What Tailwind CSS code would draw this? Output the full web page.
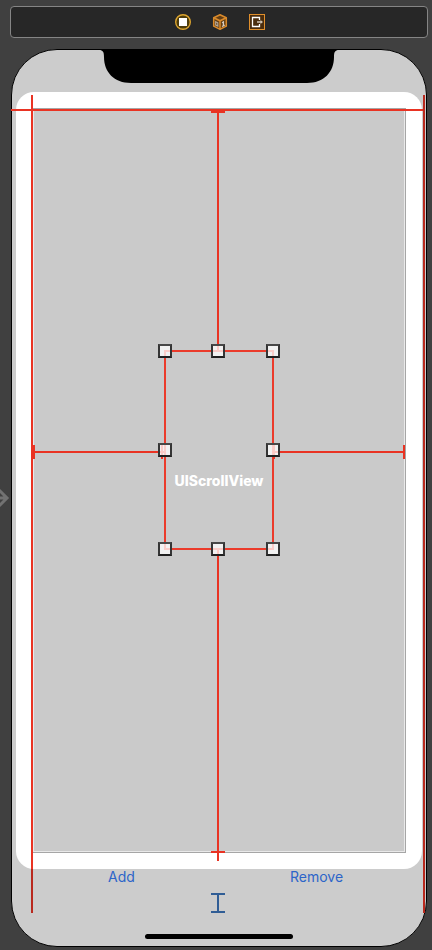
<!DOCTYPE html>
<html lang="en">
<head>
<meta charset="utf-8">
<meta name="viewport" content="width=device-width, initial-scale=1">
<title>Scene editor</title>
<script src="https://cdn.jsdelivr.net/npm/@tailwindcss/browser@4"></script>
</head>
<body class="relative flex min-h-screen flex-col overflow-x-hidden bg-[#404040] font-['Inter','Liberation_Sans',sans-serif]">

  <!-- Scene dock -->
  <header class="mt-1.5 mr-1 ml-2.5 flex h-8 items-center justify-center gap-5 rounded border border-[#858585] bg-[#272727] pl-0.5">
    <button type="button" aria-label="View controller" class="size-4">
      <svg class="block size-4" viewBox="0 0 16 16"><circle cx="8" cy="8" r="7.3" fill="#4d3c0c" stroke="#dda52f" stroke-width="1.4"/><rect x="4" y="4" width="8" height="8" fill="#fff"/></svg>
    </button>
    <button type="button" aria-label="First responder" class="mx-px size-4">
      <svg class="block size-4" viewBox="0 0 16 16"><path d="M8 .8 14.3 3.8V12.2L8 15.3 1.7 12.2V3.8Z" fill="#633e14" stroke="#d98a2b" stroke-width="1.5" stroke-linejoin="round"/><path d="M1.7 3.8 8 6.8 14.3 3.8M8 6.8V15.3" fill="none" stroke="#d98a2b" stroke-width="1.5"/><path d="M3.7 7.8 5.8 8.8V12L3.7 11Z" fill="none" stroke="#b5a898" stroke-width="1.2"/><path d="M10.1 8.8 11.4 7.9V11.8M10 12.5 12.7 11.2" fill="none" stroke="#d5ccc2" stroke-width="1.3"/></svg>
    </button>
    <button type="button" aria-label="Exit" class="size-4">
      <svg class="block size-4" viewBox="0 0 16 16"><rect x=".5" y=".5" width="15" height="15" fill="#4a2d0e" stroke="#e08f2c"/><path d="M10.5 6V3.5H3.5V12.5H10.5V10" fill="none" stroke="#fff" stroke-width="1.3"/><path d="M8 8H13" stroke="#cfc5b8" stroke-width="1.5"/><path d="M11.5 6 14 8 11.5 10Z" fill="#cfc5b8"/></svg>
    </button>
  </header>

  <!-- Entry point arrow -->
  <svg class="absolute top-[488px] left-0 h-5 w-2.5" viewBox="0 0 10 20" fill="none" stroke="#727272" stroke-width="3"><path d="M0 10H6M-1 2 7 10 -1 18"/></svg>

  <!-- Device -->
  <main class="relative mt-[11px] mr-[5px] mb-0.5 ml-[11px] flex flex-col rounded-[46px] border border-black bg-[#cccccc]">
    <div class="flex h-[42px] justify-center">
      <svg class="h-[34px] w-60" viewBox="0 0 240 34"><path d="M0 0H240C236 0 235 2 235 7C235 22 225 33 208 33H32C15 33 5 22 5 7C5 2 4 0 0 0Z"/></svg>
    </div>

    <section class="mx-1 rounded-[18px] bg-white p-4">
      <div class="relative flex h-[745px] items-center justify-center border border-[#a6a6a6] bg-[#cacaca] shadow-[inset_0_0_0_1px_#e9e9e9]">
        <h1 class="text-sm leading-4 font-extrabold text-white">UIScrollView</h1>

        <!-- Edge constraints -->
        <div class="absolute top-0.5 left-1/2 -ml-0.5 h-60 w-0.5 bg-[#e93323]"></div>
        <div class="absolute top-0.5 left-1/2 -ml-2 h-0.5 w-3.5 bg-[#e93323]"></div>
        <div class="absolute top-[441px] -bottom-[9px] left-1/2 -ml-0.5 w-0.5 bg-[#e93323]"></div>
        <div class="absolute -bottom-px left-1/2 -ml-2 h-0.5 w-3.5 bg-[#e93323]"></div>
        <div class="absolute top-[342px] right-1/2 left-0 mr-[55px] h-0.5 bg-[#e93323]"></div>
        <div class="absolute top-[336px] left-0 h-3.5 w-0.5 bg-[#e93323]"></div>
        <div class="absolute top-[342px] right-0 left-1/2 ml-[55px] h-0.5 bg-[#e93323]"></div>
        <div class="absolute top-[336px] right-0 h-3.5 w-0.5 bg-[#e93323]"></div>

        <!-- Selection -->
        <div class="absolute top-[241px] left-1/2 h-[200px] w-[110px] -translate-x-1/2 border-2 border-[#eb3b2b]">
          <div class="absolute top-[93px] -left-[5px] h-3.5 w-0.5 bg-[#e93323]"></div>
          <div class="absolute top-[93px] -right-[3px] h-3.5 w-0.5 bg-[#e93323]"></div>
          <div class="absolute -top-[8px] -left-[8px] size-3.5 border-2 border-t-[#484848] border-r-[#353535] border-b-[#202020] border-l-[#353535] bg-white/75 bg-clip-padding"></div>
          <div class="absolute -top-[8px] left-1/2 -ml-2 size-3.5 border-2 border-t-[#484848] border-r-[#353535] border-b-[#202020] border-l-[#353535] bg-white/75 bg-clip-padding"></div>
          <div class="absolute -top-[8px] -right-[8px] size-3.5 border-2 border-t-[#484848] border-r-[#353535] border-b-[#202020] border-l-[#353535] bg-white/75 bg-clip-padding"></div>
          <div class="absolute top-[91px] -left-[8px] size-3.5 border-2 border-t-[#484848] border-r-[#353535] border-b-[#202020] border-l-[#353535] bg-white/75 bg-clip-padding"></div>
          <div class="absolute top-[91px] -right-[8px] size-3.5 border-2 border-t-[#484848] border-r-[#353535] border-b-[#202020] border-l-[#353535] bg-white/75 bg-clip-padding"></div>
          <div class="absolute -bottom-[8px] -left-[8px] size-3.5 border-2 border-t-[#484848] border-r-[#353535] border-b-[#202020] border-l-[#353535] bg-white/75 bg-clip-padding"></div>
          <div class="absolute -bottom-[8px] left-1/2 -ml-2 size-3.5 border-2 border-t-[#484848] border-r-[#353535] border-b-[#202020] border-l-[#353535] bg-white/75 bg-clip-padding"></div>
          <div class="absolute -right-[8px] -bottom-[8px] size-3.5 border-2 border-t-[#484848] border-r-[#353535] border-b-[#202020] border-l-[#353535] bg-white/75 bg-clip-padding"></div>
        </div>
      </div>
    </section>

    <div class="grid grid-cols-2 px-3 text-sm leading-4 text-[#2c65c9]">
      <div class="text-center"><button type="button">Add</button></div>
      <div class="text-center"><button type="button">Remove</button></div>
    </div>

    <!-- Bottom spacing constraint -->
    <svg class="mt-2 mr-0.5 h-5 w-3.5 self-center" viewBox="0 0 14 20" fill="#305d95"><path d="M0 0H14V2H8V18H14V20H0V18H6V2H0Z"/></svg>

    <div class="mt-[21px] mb-[7px] h-[5px] w-[148px] self-center rounded-full bg-black"></div>

    <!-- Margin guides -->
    <div class="absolute top-[59px] -left-px right-0.5 h-0.5 bg-[#e93323]"></div>
    <div class="absolute top-[45px] bottom-[33px] left-[19px] flex w-0.5 flex-col">
      <div class="flex-1 bg-[#e93323]"></div>
      <div class="h-11 bg-[#b9291e]"></div>
    </div>
    <div class="absolute top-[45px] right-px bottom-[33px] w-0.5 bg-[#b9291e]"></div>
  </main>
</body>
</html>
